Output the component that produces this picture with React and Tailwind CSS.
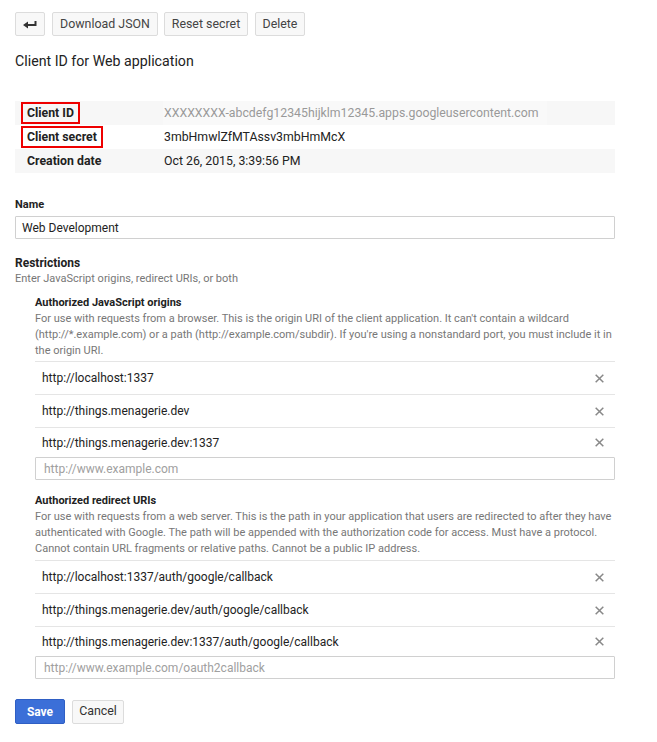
import React from 'react';

const ORIGINS = [
  'http://localhost:1337',
  'http://things.menagerie.dev',
  'http://things.menagerie.dev:1337',
];

const REDIRECTS = [
  'http://localhost:1337/auth/google/callback',
  'http://things.menagerie.dev/auth/google/callback',
  'http://things.menagerie.dev:1337/auth/google/callback',
];

const BackIcon = () => (
  <svg width="14" height="9" viewBox="0 0 14 9" fill="#333">
    <path d="M0 5 L5 1.5 L5 4 L11.5 4 L11.5 1 L13.5 1 L13.5 6 L5 6 L5 8.5 Z" />
  </svg>
);

const CloseIcon = () => (
  <svg width="9" height="9" viewBox="0 0 9 9" stroke="#888" strokeWidth="1.5" strokeLinecap="square">
    <path d="M1.2 1.2 L7.8 7.8 M7.8 1.2 L1.2 7.8" />
  </svg>
);

const TopButton = ({ children, className = '' }) => (
  <button
    className={`h-[24px] rounded-[2px] border border-[#dcdcdc] bg-[#f8f8f8] text-[12.4px] text-[#444] flex items-center justify-center ${className}`}
  >
    {children}
  </button>
);

const UriList = ({ items, placeholder }) => (
  <div className="w-[580px]">
    <div className="border-t border-[#e5e5e5]">
      {items.map((item, i) => (
        <div
          key={item}
          className={`flex items-center justify-between pl-[7px] pr-[11px] ${
            i < items.length - 1 ? 'h-[33px] border-b border-[#e5e5e5]' : 'h-[29px]'
          }`}
        >
          <span className="text-[12px] text-[#222]">{item}</span>
          <CloseIcon />
        </div>
      ))}
    </div>
    <div className="h-[23px] border border-[#d0d0d0] rounded-[1px] flex items-center px-[8px] text-[12px] text-[#a0a0a0]">
      {placeholder}
    </div>
  </div>
);

const App = () => {
  return (
    <div
      className="w-[657px] h-[742px] bg-white pl-[15px] pt-[12px] text-[#222]"
      style={{ fontFamily: 'Roboto, "Liberation Sans", Arial, sans-serif' }}
    >
      {/* Toolbar */}
      <div className="flex items-center">
        <TopButton className="w-[30px]">
          <BackIcon />
        </TopButton>
        <TopButton className="w-[106px] ml-[7px]">Download JSON</TopButton>
        <TopButton className="w-[84px] ml-[6px]">Reset secret</TopButton>
        <TopButton className="w-[50px] ml-[7px]">Delete</TopButton>
      </div>

      <h1 className="mt-[16px] text-[14.2px] leading-[18px] text-[#222] font-normal">Client ID for Web application</h1>

      {/* Credentials table */}
      <div className="mt-[31px] w-[600px] text-[12.3px]">
        <div className="h-[24px] flex items-center bg-[#f7f7f7]">
          <div className="w-[148px] pl-[6px]">
            <span className="inline-flex items-center h-[22px] px-[4px] border-2 border-[#e00] font-bold">Client ID</span>
          </div>
          <div className="w-[384px] h-[24px] flex items-center pl-[1px] bg-[#f9f9f9] text-[#999]">
            XXXXXXXX-abcdefg12345hijklm12345.apps.googleusercontent.com
          </div>
        </div>
        <div className="h-[24px] flex items-center bg-white">
          <div className="w-[148px] pl-[6px]">
            <span className="inline-flex items-center h-[22px] px-[4px] border-2 border-[#e00] font-bold">Client secret</span>
          </div>
          <div className="pl-[1px] text-[#222]">3mbHmwlZfMTAssv3mbHmMcX</div>
        </div>
        <div className="h-[24px] flex items-center bg-[#f7f7f7]">
          <div className="w-[148px] pl-[12px] font-bold">Creation date</div>
          <div className="pl-[1px] text-[#222]">Oct 26, 2015, 3:39:56 PM</div>
        </div>
      </div>

      {/* Name */}
      <div className="mt-[25px] text-[11px] font-bold leading-[14px]">Name</div>
      <div className="mt-[4px] w-[600px] h-[23px] border border-[#d0d0d0] rounded-[1px] flex items-center px-[6px] text-[12px] text-[#222]">
        Web Development
      </div>

      {/* Restrictions */}
      <div className="mt-[16px] text-[12px] font-bold leading-[16px]">Restrictions</div>
      <div className="text-[11px] leading-[16px] text-[#777]">Enter JavaScript origins, redirect URIs, or both</div>

      <div className="pl-[20px] mt-[8px]">
        <div className="text-[11px] font-bold leading-[16px]">Authorized JavaScript origins</div>
        <p className="w-[580px] text-[11px] leading-[16px] text-[#777]">
          For use with requests from a browser. This is the origin URI of the client application. It can't contain a wildcard (http://*.example.com) or a path (http://example.com/subdir). If you're using a nonstandard port, you must include it in the origin URI.
        </p>
        <div className="mt-[2px]">
          <UriList items={ORIGINS} placeholder="http://www.example.com" />
        </div>

        <div className="mt-[13px] text-[11px] font-bold leading-[16px]">Authorized redirect URIs</div>
        <p className="w-[580px] text-[11px] leading-[16px] text-[#777]">
          For use with requests from a web server. This is the path in your application that users are redirected to after they have authenticated with Google. The path will be appended with the authorization code for access. Must have a protocol. Cannot contain URL fragments or relative paths. Cannot be a public IP address.
        </p>
        <div className="mt-[3px]">
          <UriList items={REDIRECTS} placeholder="http://www.example.com/oauth2callback" />
        </div>
      </div>

      {/* Actions */}
      <div className="mt-[20px] flex items-center">
        <button className="w-[50px] h-[25px] rounded-[2px] bg-[#3b6fd8] border border-[#2f5fc4] text-white text-[12px] font-bold">
          Save
        </button>
        <button className="ml-[7px] w-[52px] h-[24px] rounded-[2px] border border-[#dcdcdc] bg-[#f8f8f8] text-[12.4px] text-[#333]">
          Cancel
        </button>
      </div>
    </div>
  );
};

export default App;
